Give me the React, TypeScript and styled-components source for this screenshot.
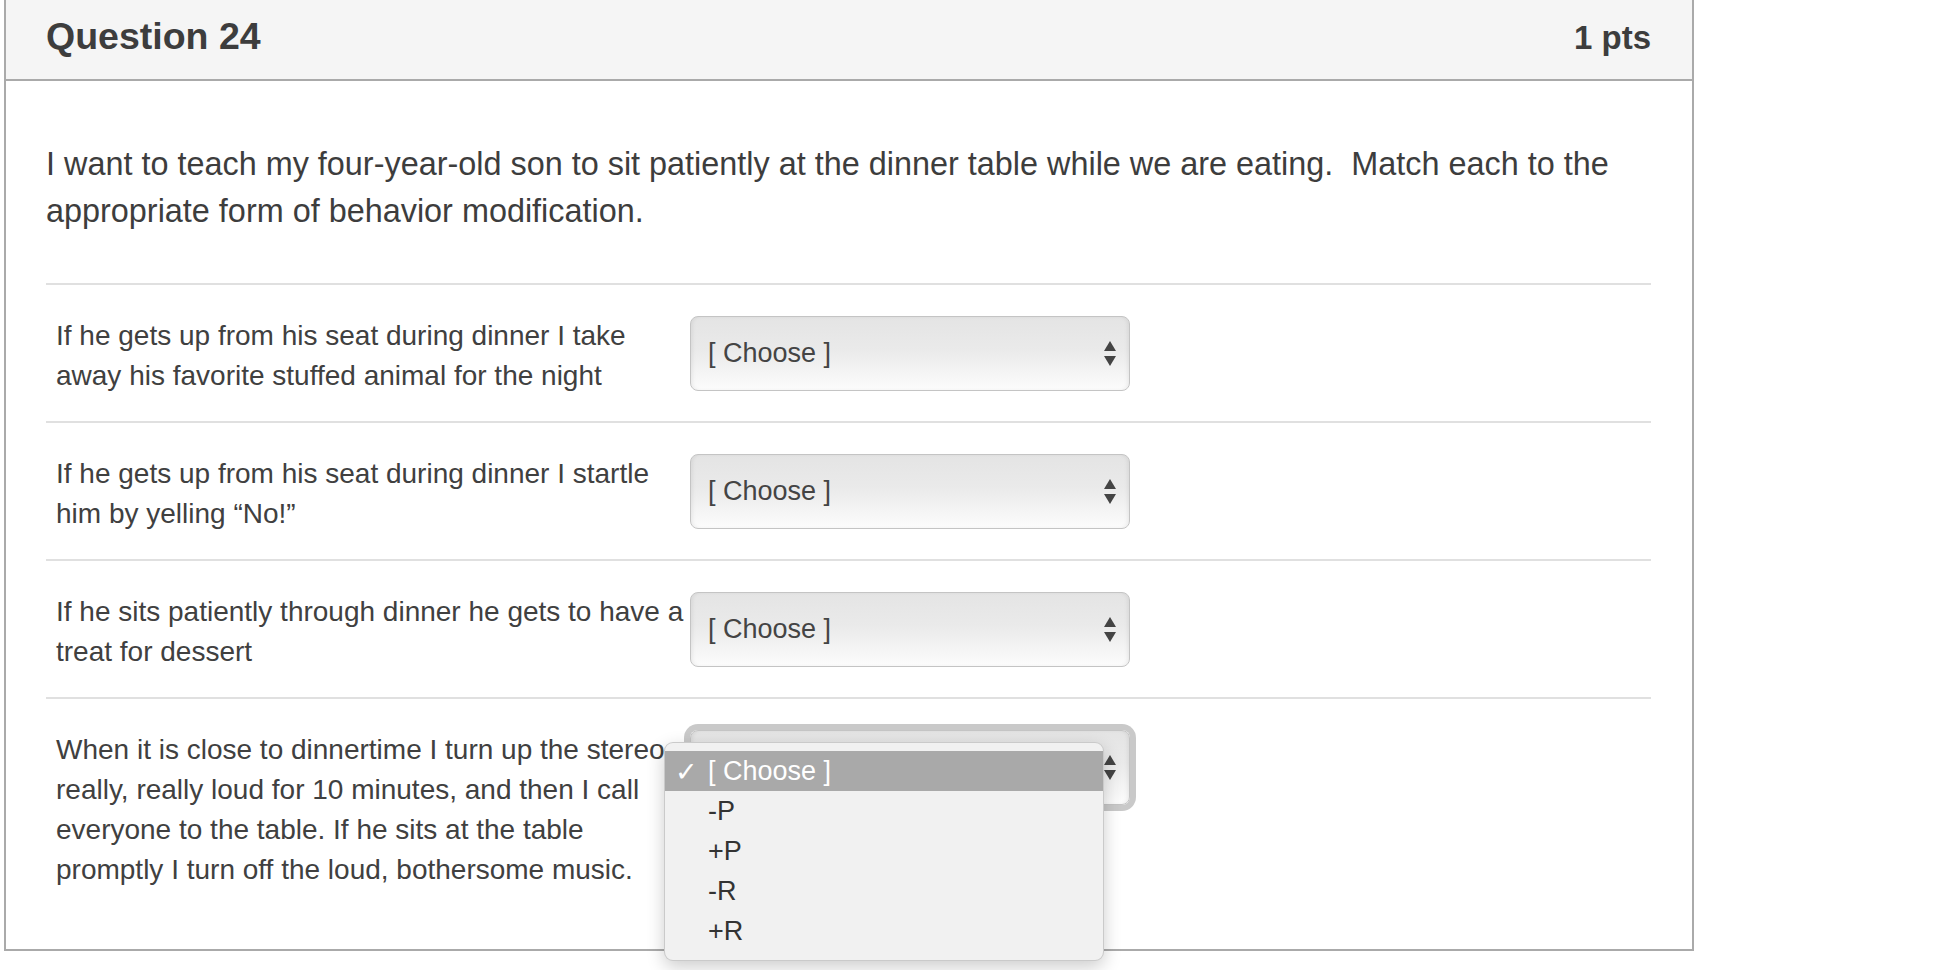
import React from 'react'
import styled, { createGlobalStyle } from 'styled-components'

const GlobalStyle = createGlobalStyle`
  html, body {
    margin: 0;
    padding: 0;
    background: #ffffff;
  }
  body {
    font-family: "Liberation Sans", Arial, Helvetica, sans-serif;
    color: #3f3f3f;
  }
  #root {
    min-height: 970px;
  }
  * {
    box-sizing: border-box;
  }
`

const Panel = styled.div`
  margin-left: 4px;
  width: 1690px;
  border: 2px solid #aaaaaa;
  border-top: none;
`

const Header = styled.div`
  display: flex;
  align-items: baseline;
  justify-content: space-between;
  height: 81px;
  padding: 18px 41px 0 40px;
  background: #f5f5f5;
  border-bottom: 2px solid #aaaaaa;
`

const QuestionName = styled.div`
  font-size: 37.5px;
  line-height: 37px;
  font-weight: bold;
  color: #3d3d3d;
`

const Points = styled.div`
  font-size: 33px;
  line-height: 37px;
  font-weight: bold;
  color: #3d3d3d;
`

const Body = styled.div`
  padding: 60px 41px 34px 40px;
`

const QuestionText = styled.p`
  margin: 0 0 48px;
  font-size: 32.4px;
  line-height: 47px;
  color: #3d3d3d;
`

const AnswerRow = styled.div`
  display: grid;
  grid-template-columns: 644px 440px;
  align-items: start;
  padding: 31px 0 25px;
  border-top: 2px solid #e0e0e0;
`

const AnswerText = styled.div`
  padding-left: 10px;
  font-size: 28px;
  line-height: 40px;
  color: #404040;
`

const SelectBox = styled.div<{ $focused?: boolean }>`
  position: relative;
  display: flex;
  align-items: center;
  justify-content: space-between;
  height: 75px;
  padding: 0 13px 0 17px;
  border: 1px solid #c4c4c4;
  border-radius: 8px;
  background: linear-gradient(to bottom, #e4e4e4 0%, #eaeaea 45%, #fcfcfc 100%);
  box-shadow: ${({ $focused }) =>
    $focused
      ? '0 0 0 6px #c9c9c9, inset 3px 0 4px -2px rgba(0,0,0,0.08), inset -3px 0 4px -2px rgba(0,0,0,0.08)'
      : 'inset 3px 0 4px -2px rgba(0,0,0,0.08), inset -3px 0 4px -2px rgba(0,0,0,0.08)'};
  font-size: 27px;
  color: #444444;
`

const Arrows = styled.svg`
  width: 12px;
  height: 25px;
  flex-shrink: 0;
`

const Menu = styled.div`
  position: absolute;
  top: 11px;
  left: -27px;
  width: 440px;
  padding: 8px 0 9px;
  background: #f1f1f1;
  border: 1px solid rgba(0, 0, 0, 0.16);
  border-radius: 9px;
  box-shadow: 0 6px 18px rgba(0, 0, 0, 0.2);
  z-index: 10;
`

const MenuItem = styled.div<{ $active?: boolean }>`
  display: flex;
  align-items: center;
  height: 40px;
  padding-left: 10px;
  font-size: 27px;
  background: ${({ $active }) => ($active ? '#a9a9a9' : 'transparent')};
  color: ${({ $active }) => ($active ? '#ffffff' : '#333333')};
`

const Check = styled.span`
  width: 33px;
  font-family: "DejaVu Sans", sans-serif;
  font-size: 27px;
  font-weight: bold;
`

const options = ['[ Choose ]', '-P', '+P', '-R', '+R']

const answers = [
  'If he gets up from his seat during dinner I take away his favorite stuffed animal for the night',
  'If he gets up from his seat during dinner I startle him by yelling \u201cNo!\u201d',
  'If he sits patiently through dinner he gets to have a treat for dessert',
  'When it is close to dinnertime I turn up the stereo really, really loud for 10 minutes, and then I call everyone to the table. If he sits at the table promptly I turn off the loud, bothersome music.',
]

const SelectArrows: React.FC = () => (
  <Arrows viewBox="0 0 12 25">
    <polygon points="0,10 6,0 12,10" fill="#444" />
    <polygon points="0,15 12,15 6,25" fill="#444" />
  </Arrows>
)

const App: React.FC = () => {
  return (
    <>
      <GlobalStyle />
      <Panel>
        <Header>
          <QuestionName>Question 24</QuestionName>
          <Points>1 pts</Points>
        </Header>
        <Body>
          <QuestionText>
            I want to teach my four-year-old son to sit patiently at the dinner table while we are eating.{'\u00a0 '}Match each to the appropriate form of behavior modification.
          </QuestionText>
          {answers.map((text, i) => {
            const open = i === answers.length - 1
            return (
              <AnswerRow key={i}>
                <AnswerText>{text}</AnswerText>
                <SelectBox $focused={open}>
                  <span>[ Choose ]</span>
                  <SelectArrows />
                  {open && (
                    <Menu>
                      {options.map((opt, j) => (
                        <MenuItem key={opt} $active={j === 0}>
                          <Check>{j === 0 ? '\u2713' : ''}</Check>
                          {opt}
                        </MenuItem>
                      ))}
                    </Menu>
                  )}
                </SelectBox>
              </AnswerRow>
            )
          })}
        </Body>
      </Panel>
    </>
  )
}

export default App
